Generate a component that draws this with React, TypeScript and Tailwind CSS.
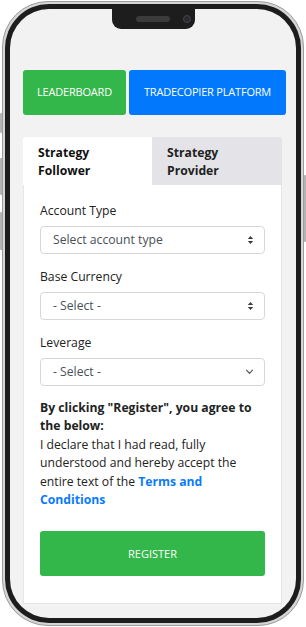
import React from 'react';

const UpDown = () => (
  <svg width="7" height="10" viewBox="0 0 7 10" className="text-[#343a40]">
    <path d="M3.5 1 L6.2 4 H0.8 Z" fill="currentColor" />
    <path d="M3.5 9 L6.2 6 H0.8 Z" fill="currentColor" />
  </svg>
);

const ChevronDown = () => (
  <svg width="9" height="6" viewBox="0 0 9 6" className="text-[#555]">
    <path d="M1.5 1.2 L4.5 4.3 L7.5 1.2" fill="none" stroke="currentColor" strokeWidth="1.2" strokeLinecap="round" strokeLinejoin="round" />
  </svg>
);

const SelectBox = ({ text, icon }: { text: string; icon: React.ReactNode }) => (
  <div className="flex items-center justify-between h-[28px] border border-[#d4d7db] rounded-[4px] bg-white pl-[12px] pr-[10px]">
    <span className="text-[12.2px] text-[#495057]">{text}</span>
    {icon}
  </div>
);

export default function App() {
  return (
    <div className="w-[306px] h-[627px] bg-white relative" style={{ fontFamily: '"Open Sans", "Liberation Sans", sans-serif' }}>
      {/* side buttons */}
      <div className="absolute left-[0px] top-[113px] w-[3px] h-[20px] bg-[#b4b4b4] rounded-l-[1px]" />
      <div className="absolute left-[0px] top-[158px] w-[3px] h-[37px] bg-[#b4b4b4] rounded-l-[1px]" />
      <div className="absolute left-[0px] top-[212px] w-[3px] h-[38px] bg-[#b4b4b4] rounded-l-[1px]" />
      <div className="absolute right-[0px] top-[175px] w-[3px] h-[67px] bg-[#b4b4b4] rounded-r-[1px]" />

      {/* phone frame */}
      <div className="absolute left-[2px] top-[1px] w-[302px] h-[625px] rounded-[46px] border border-[#9c9c9c] bg-[#d6d6d6] p-[2px]">
        <div className="w-full h-full rounded-[44px] bg-[#1d1d1d] p-[5px]">
          <div className="relative w-full h-full rounded-[39px] bg-[#f2f2f2] overflow-hidden">
            {/* notch */}
            <div className="absolute left-[102px] top-0 w-[83px] h-[20px] bg-[#1d1d1d] rounded-b-[9px] flex items-center">
              <div className="ml-[24px] w-[34px] h-[6px] rounded-full bg-[#3b3b3b]" />
              <div className="ml-[13px] w-[8px] h-[8px] rounded-full bg-[#2a2a33] border border-[#444]" />
            </div>

            <div className="pt-[61px] pl-[13px]">
              {/* top buttons */}
              <div className="flex gap-[3px]">
                <div className="w-[103px] h-[45px] rounded-[3px] bg-[#33b64a] flex items-center justify-center text-white text-[11px] tracking-[-0.2px]">
                  LEADERBOARD
                </div>
                <div className="w-[157px] h-[45px] rounded-[3px] bg-[#0279fd] flex items-center justify-center text-white text-[11px] tracking-[-0.2px]">
                  TRADECOPIER PLATFORM
                </div>
              </div>

              {/* card */}
              <div className="mt-[22px] w-[259px]">
                <div className="flex h-[48px]">
                  <div className="w-[129px] bg-white rounded-tl-[3px] pl-[15px] pt-[7px] text-[12.2px] font-bold leading-[18px] text-[#111]">
                    Strategy<br />Follower
                  </div>
                  <div className="w-[130px] bg-[#e4e4e8] rounded-tr-[3px] pl-[15px] pt-[7px] text-[12.2px] font-bold leading-[18px] text-[#222]">
                    Strategy<br />Provider
                  </div>
                </div>
                <div className="bg-white border border-t-0 border-[#e6e6e6] px-[16px] pt-[17px] pb-[27px]">
                  <div className="text-[12.2px] leading-[18px] text-[#222]">Account Type</div>
                  <div className="mt-[6px]">
                    <SelectBox text="Select account type" icon={<UpDown />} />
                  </div>
                  <div className="mt-[14px] text-[12.2px] leading-[18px] text-[#222]">Base Currency</div>
                  <div className="mt-[6px]">
                    <SelectBox text="- Select -" icon={<UpDown />} />
                  </div>
                  <div className="mt-[14px] text-[12.2px] leading-[18px] text-[#222]">Leverage</div>
                  <div className="mt-[6px]">
                    <SelectBox text="- Select -" icon={<ChevronDown />} />
                  </div>
                  <p className="mt-[13px] text-[12.2px] leading-[18.4px] text-[#222]">
                    <span className="font-bold">By clicking "Register", you agree to the below:</span>
                    <br />
                    I declare that I had read, fully understood and hereby accept the entire text of the{' '}
                    <span className="font-bold text-[#0a7bff]">Terms and Conditions</span>
                  </p>
                  <div className="mt-[22px] h-[45px] rounded-[3px] bg-[#33b64a] flex items-center justify-center text-white text-[11px]">
                    REGISTER
                  </div>
                </div>
              </div>
            </div>
          </div>
        </div>
      </div>
    </div>
  );
}
